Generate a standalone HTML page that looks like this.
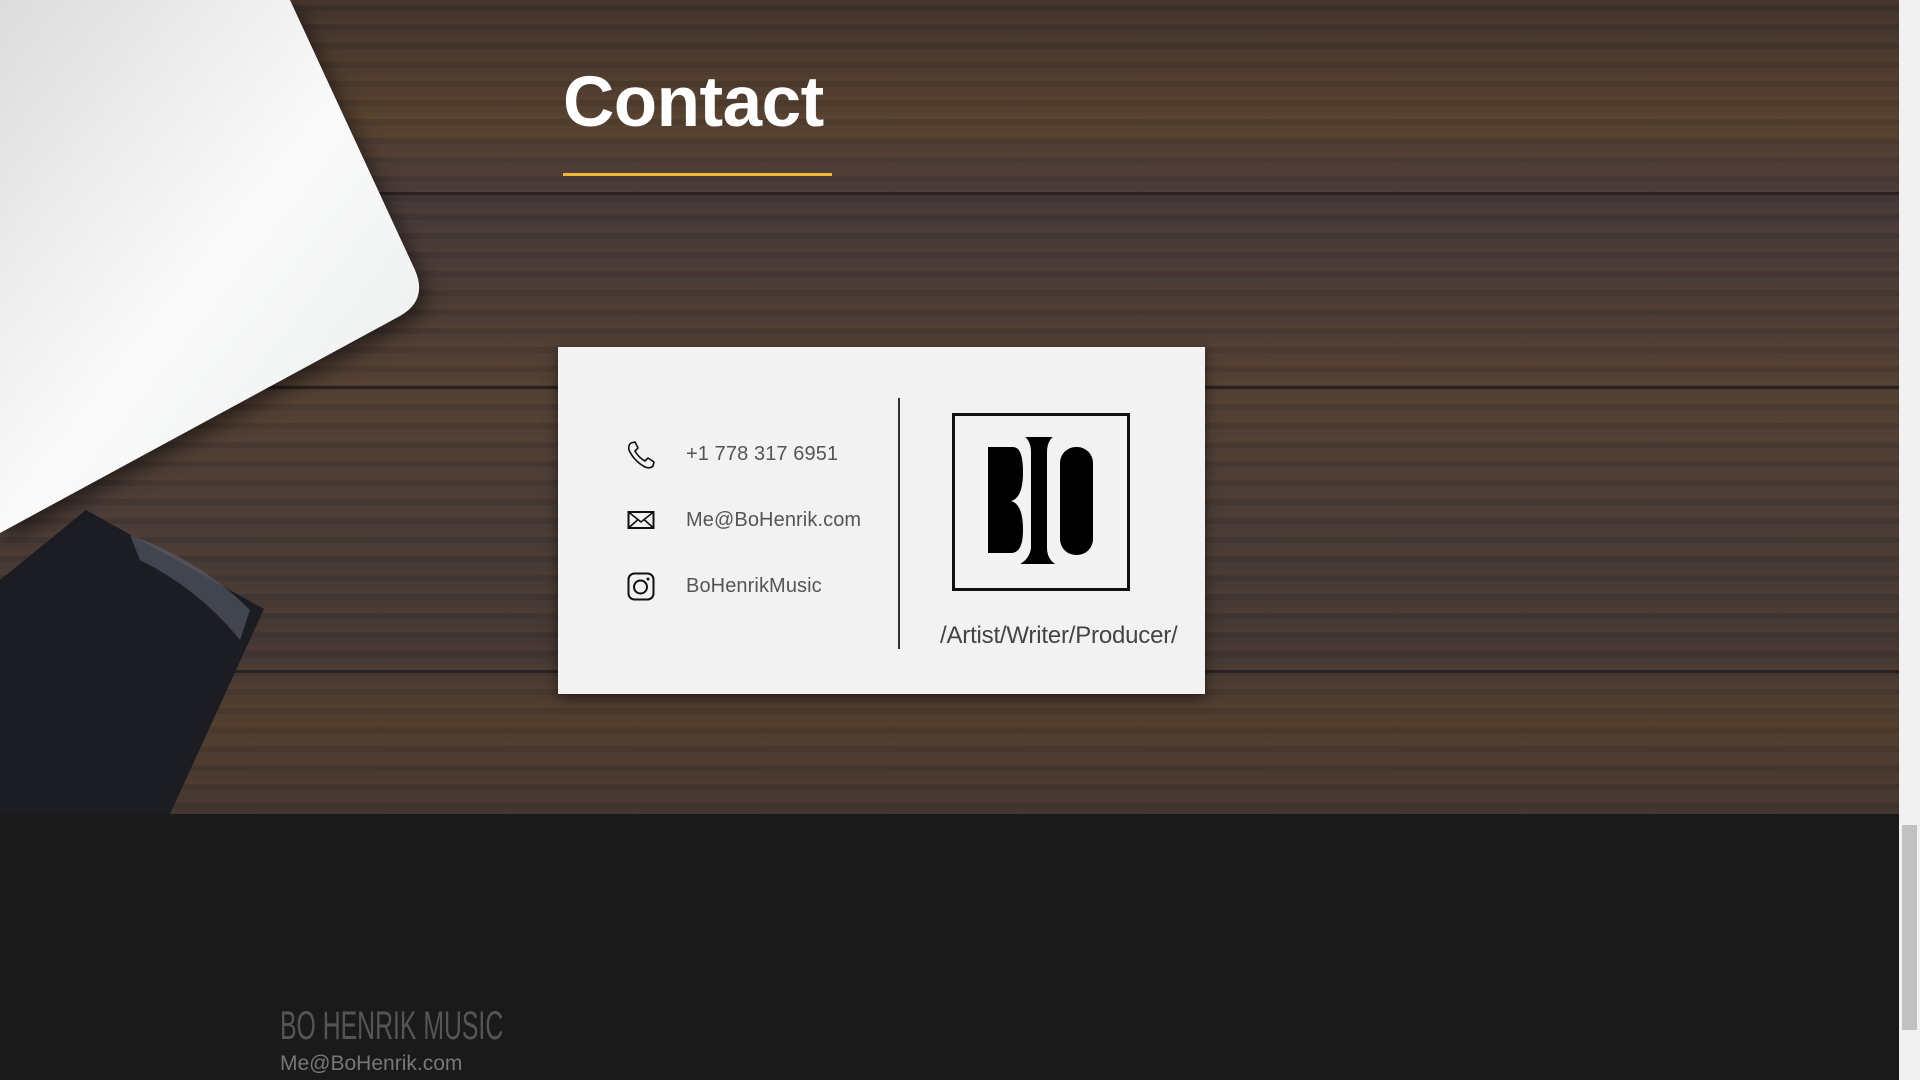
<!DOCTYPE html>
<html><head><meta charset="utf-8"><style>
*{margin:0;padding:0;box-sizing:border-box}
html,body{width:1920px;height:1080px;overflow:hidden;background:#1a1a1a;font-family:"Liberation Sans",sans-serif}
#wood{position:absolute;left:0;top:0;width:1899px;height:814px;overflow:hidden;
background:
linear-gradient(180deg,rgba(0,0,0,0) 0,rgba(0,0,0,0) 192px,#2a2220 192px,#2a2220 195px,rgba(0,0,0,0) 195px,rgba(0,0,0,0) 386px,#2a2220 386px,#2a2220 389px,rgba(0,0,0,0) 389px,rgba(0,0,0,0) 670px,#2a2220 670px,#2a2220 673px,rgba(0,0,0,0) 673px),
repeating-linear-gradient(180deg,rgba(120,80,50,.12) 0 5px,rgba(30,25,25,.12) 5px 11px,rgba(90,70,60,.08) 11px 19px),
linear-gradient(180deg,#3f322d 0,#56412f 120px,#46393a 200px,#4a3b35 300px,#534033 390px,#4a3c37 500px,#433733 650px,#513e2f 720px,#433631 814px);}
#scroll{position:absolute;left:1899px;top:0;width:21px;height:1080px;background:#f1f1f1}
#thumb{position:absolute;left:1902px;top:825px;width:15px;height:205px;background:#c1c1c1}
h1{position:absolute;left:563px;top:62px;font-size:71px;font-weight:bold;color:#fff;letter-spacing:-.5px}
#ul{position:absolute;left:563px;top:173px;width:269px;height:3px;background:#f0b73b}
#card{position:absolute;left:558px;top:347px;width:647px;height:347px;background:#f2f2f2;box-shadow:0 4px 12px rgba(0,0,0,.5)}
#div{position:absolute;left:898px;top:398px;width:2px;height:251px;background:#333}
.t{position:absolute;left:686px;font-size:20px;color:#555;letter-spacing:.1px}
.ic{position:absolute;left:626px}
#tag{position:absolute;left:940px;top:622px;font-size:24px;color:#444;letter-spacing:-.2px}
#fb{position:absolute;left:280px;top:1004px;font-size:40px;color:#555;transform:scaleX(.62);transform-origin:left top;white-space:nowrap}
#fe{position:absolute;left:280px;top:1052px;font-size:21px;color:#777}
</style></head><body>
<div id="wood">
<svg width="1899" height="814" style="position:absolute;left:0;top:0">
<defs><linearGradient id="lg" x1="0" y1="0" x2="1" y2="1"><stop offset="0" stop-color="#dcdcdc"/><stop offset=".5" stop-color="#fafafa"/><stop offset="1" stop-color="#e8ecec"/></linearGradient></defs>
<path d="M86 510 L264 609 L170 814 L0 814 L0 580 Z" fill="#1c1d22"/>
<path d="M130 535 Q200 560 250 610 L240 640 Q200 590 140 560 Z" fill="#5a6070" opacity=".6"/>
<path d="M0 0 L290 0 L415 270 Q428 300 400 316 L0 533 Z" fill="url(#lg)" style="filter:drop-shadow(6px 8px 10px rgba(0,0,0,.5))"/>
</svg>
</div>
<h1>Contact</h1>
<div id="ul"></div>
<div id="card"></div>
<div id="div"></div>
<svg class="ic" style="top:441px" width="30" height="28" viewBox="0 0 30 28"><path d="M5 2 L9 1 L12 7 L9 10 Q13 17 19 20 L22 17 L28 21 L27 25 Q24 28 19 26 Q8 20 3 9 Q2 4 5 2 Z" fill="none" stroke="#111" stroke-width="1.6" stroke-linejoin="round"/></svg>
<svg class="ic" style="top:510px" width="30" height="20" viewBox="0 0 30 20"><rect x="2.5" y="2" width="25" height="16" fill="none" stroke="#111" stroke-width="2"/><path d="M2.5 2 L15 12 L27.5 2 M2.5 18 L12 9.5 M27.5 18 L18 9.5" fill="none" stroke="#111" stroke-width="1.6"/></svg>
<svg class="ic" style="top:571px" width="30" height="31" viewBox="0 0 30 31"><rect x="2.5" y="2.5" width="25" height="26" rx="6" fill="none" stroke="#111" stroke-width="2"/><circle cx="14.5" cy="16" r="6.5" fill="none" stroke="#111" stroke-width="2"/><circle cx="22" cy="8" r="1.5" fill="#111"/></svg>
<div class="t" style="top:443px">+1 778 317 6951</div>
<div class="t" style="top:509px">Me@BoHenrik.com</div>
<div class="t" style="top:575px">BoHenrikMusic</div>
<svg style="position:absolute;left:951px;top:412px" width="180" height="180" viewBox="0 0 180 180">
<rect x="2.5" y="2.5" width="175" height="175" fill="none" stroke="#111" stroke-width="3"/>
<path d="M37 35 H62 Q72 35 72 60 Q72 86 60 89 Q72 92 72 118 Q72 141 60 141 H37 Z" fill="#000"/>
<path d="M67 23 H109 Q98 27 98 40 V136 Q98 150 114 154 H58 Q76 150 78 136 V40 Q78 27 67 23 Z" fill="#000" stroke="#f2f2f2" stroke-width="4"/>
<rect x="109" y="35" width="33" height="108" rx="16" fill="#000"/>
</svg>
<div id="tag">/Artist/Writer/Producer/</div>
<div id="fb">BO HENRIK MUSIC</div>
<div id="fe">Me@BoHenrik.com</div>
<div id="scroll"></div><div id="thumb"></div>
</body></html>
